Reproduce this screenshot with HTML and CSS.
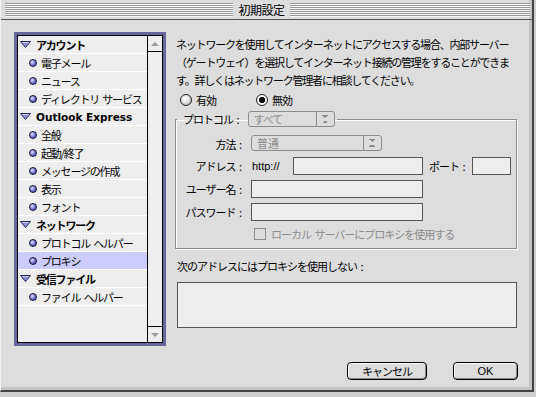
FILE: index.html
```html
<!DOCTYPE html>
<html>
    <head>
        <title>初期設定</title>
        <link rel="stylesheet" href="styles.css">
    </head>
    <body>
        <div class="window">
            <div class="titlebar">
                <div class="stripes">
                    <span class="title">初期設定</span>
                </div>
            </div>

            <div class="content">
                <!-- left tree -->
                <div class="sidebar">
                    <div class="list-frame">
                        <ul class="tree">
                            <li class="group-row"><svg class="twisty" width="11" height="7" viewBox="0 0 11 7"><polygon points="0.5,0.5 10.5,0.5 5.5,6.5" fill="#8f8fe0" stroke="#222255"/><line x1="2" y1="1.5" x2="9" y2="1.5" stroke="#ccccff"/></svg>アカウント</li>
                            <li class="item"><span class="dot"></span>電子メール</li>
                            <li class="item"><span class="dot"></span>ニュース</li>
                            <li class="item"><span class="dot"></span>ディレクトリ サービス</li>
                            <li class="group-row latin"><svg class="twisty" width="11" height="7" viewBox="0 0 11 7"><polygon points="0.5,0.5 10.5,0.5 5.5,6.5" fill="#8f8fe0" stroke="#222255"/><line x1="2" y1="1.5" x2="9" y2="1.5" stroke="#ccccff"/></svg>Outlook Express</li>
                            <li class="item"><span class="dot"></span>全般</li>
                            <li class="item"><span class="dot"></span>起動/終了</li>
                            <li class="item"><span class="dot"></span>メッセージの作成</li>
                            <li class="item"><span class="dot"></span>表示</li>
                            <li class="item"><span class="dot"></span>フォント</li>
                            <li class="group-row"><svg class="twisty" width="11" height="7" viewBox="0 0 11 7"><polygon points="0.5,0.5 10.5,0.5 5.5,6.5" fill="#8f8fe0" stroke="#222255"/><line x1="2" y1="1.5" x2="9" y2="1.5" stroke="#ccccff"/></svg>ネットワーク</li>
                            <li class="item"><span class="dot"></span>プロトコル ヘルパー</li>
                            <li class="item selected"><span class="dot"></span>プロキシ</li>
                            <li class="group-row"><svg class="twisty" width="11" height="7" viewBox="0 0 11 7"><polygon points="0.5,0.5 10.5,0.5 5.5,6.5" fill="#8f8fe0" stroke="#222255"/><line x1="2" y1="1.5" x2="9" y2="1.5" stroke="#ccccff"/></svg>受信ファイル</li>
                            <li class="item"><span class="dot"></span>ファイル ヘルパー</li>
                        </ul>
                        <div class="scrollbar">
                            <div class="arrow-box up"><span class="tri-up"></span></div>
                            <div class="track"></div>
                            <div class="arrow-box down"><span class="tri-down"></span></div>
                        </div>
                    </div>
                </div>

                <!-- right pane -->
                <div class="pane">
                    <p class="intro">ネットワークを使用してインターネットにアクセスする場合、内部サーバー<br>（ゲートウェイ）を選択してインターネット接続の管理をすることができま<br>す。詳しくはネットワーク管理者に相談してください。</p>

                    <div class="radios">
                        <label class="radio"><span class="radio-ball"></span>有効</label>
                        <label class="radio on"><span class="radio-ball"></span>無効</label>
                    </div>

                    <fieldset class="group">
                        <legend class="legend">
                            <span>プロトコル :</span>
                            <span class="popup popup-small"><span class="popup-text">すべて</span><span class="popup-arrows"></span></span>
                        </legend>
                        <div class="form-grid">
                            <span class="label">方法 :</span>
                            <div class="field"><span class="popup popup-wide"><span class="popup-text">普通</span><span class="popup-arrows"></span></span></div>

                            <span class="label">アドレス :</span>
                            <div class="field">
                                <span class="latin-text">http://</span>
                                <span class="input address"></span>
                                <span class="port-label">ポート :</span>
                                <span class="input port"></span>
                            </div>

                            <span class="label">ユーザー名 :</span>
                            <div class="field"><span class="input long"></span></div>

                            <span class="label">パスワード :</span>
                            <div class="field"><span class="input long"></span></div>

                            <span class="label"></span>
                            <div class="field check-row"><span class="checkbox"></span>ローカル サーバーにプロキシを使用する</div>
                        </div>
                    </fieldset>

                    <div class="bypass-label">次のアドレスにはプロキシを使用しない :</div>
                    <div class="bypass-box"></div>

                    <div class="buttons">
                        <span class="button cancel">キャンセル</span>
                        <span class="button ok">OK</span>
                    </div>
                </div>
            </div>
        </div>
    </body>
</html>
```

FILE: styles.css
```css
body {
    margin: 0;
    padding: 0;
    background-color: #cfcfcf;
    font-family: "Noto Sans CJK JP", "DejaVu Sans", sans-serif;
    font-size: 11px;
    word-spacing: 2px;
    color: #000;
}

.window {
    width: 534px;
    height: 392px;
    box-sizing: border-box;
    background-color: #dddddd;
    border-left: 1px solid #f4f4f4;
    border-right: 2px solid #444;
    border-bottom: 2px solid #444;
    box-shadow: inset -3px -3px 0 #c4c4c4;
}

/* title bar with pinstripes */
.titlebar {
    height: 20px;
    border-bottom: 1px solid #555;
    padding: 3px 2px 0 4px;
    box-sizing: border-box;
}

.stripes {
    height: 14px;
    display: flex;
    justify-content: center;
    align-items: center;
    background: repeating-linear-gradient(to bottom, #9a9a9a 0, #9a9a9a 1px, #f6f6f6 1px, #f6f6f6 2px);
}

.title {
    background-color: #dddddd;
    padding: 0 5px;
    margin-right: 12px;
    height: 16px;
    line-height: 16px;
    font-size: 12px;
    letter-spacing: -0.5px;
}

.content {
    display: flex;
    padding: 12px 0 0 13px;
}

/* sidebar list */
.sidebar {
    width: 152px;
    height: 314px;
    box-sizing: border-box;
    border: 3px solid #666699;
}

.list-frame {
    display: flex;
    height: 100%;
    box-sizing: border-box;
    border: 1px solid #000;
    background-color: #eeeeee;
}

.tree {
    list-style: none;
    margin: 0;
    padding: 0;
    width: 129px;
    overflow: hidden;
}

.tree li {
    height: 18px;
    box-sizing: border-box;
    border-bottom: 1px solid #ffffff;
    display: flex;
    align-items: center;
    white-space: pre;
    letter-spacing: -1.2px;
}

.group-row {
    font-weight: bold;
    padding-left: 2px;
}

.group-row.latin {
    font-family: "DejaVu Sans", sans-serif;
    font-size: 10.5px;
    letter-spacing: 0;
    word-spacing: 0;
}

.twisty {
    margin-right: 5px;
}

.item {
    padding-left: 11px;
}

.item.selected {
    background-color: #ccccff;
}

.dot {
    width: 6px;
    height: 6px;
    border-radius: 50%;
    border: 1px solid #111133;
    background: radial-gradient(circle at 35% 35%, #e6e6ff 0, #8080e0 45%, #33338a 100%);
    margin-right: 4px;
    flex-shrink: 0;
}

.scrollbar {
    width: 14px;
    border-left: 1px solid #000;
    display: flex;
    flex-direction: column;
    background-color: #eeeeee;
}

.arrow-box {
    height: 15px;
    display: flex;
    align-items: center;
    justify-content: center;
}

.arrow-box.up {
    border-bottom: 1px solid #000;
}

.arrow-box.down {
    border-top: 1px solid #000;
}

.track {
    flex: 1;
}

.tri-up {
    width: 0;
    height: 0;
    border-left: 4px solid transparent;
    border-right: 4px solid transparent;
    border-bottom: 4px solid #9a9a9a;
}

.tri-down {
    width: 0;
    height: 0;
    border-left: 4px solid transparent;
    border-right: 4px solid transparent;
    border-top: 4px solid #9a9a9a;
}

/* right pane */
.pane {
    width: 344px;
    margin-left: 8px;
}

.intro {
    margin: 0;
    padding: 3px 0 0 2px;
    line-height: 18px;
    letter-spacing: -1.2px;
    white-space: nowrap;
}

.radios {
    display: flex;
    height: 14px;
    margin-top: 4px;
    padding-left: 6px;
}

.radio {
    display: flex;
    align-items: center;
    letter-spacing: -1px;
}

.radio + .radio {
    margin-left: 40px;
}

.radio-ball {
    width: 12px;
    height: 12px;
    box-sizing: border-box;
    border-radius: 50%;
    border: 1px solid #222;
    background: radial-gradient(circle at 40% 35%, #ffffff 0, #e8e8e8 40%, #9c9c9c 100%);
    margin-right: 4px;
}

.radio.on .radio-ball {
    background: radial-gradient(circle, #000 0, #000 2.5px, #444 3px, #fff 3.5px, #ddd 100%);
}

/* protocol group */
.group {
    margin: 4px 0 0 1px;
    width: 342px;
    box-sizing: border-box;
    padding: 8px 0 6px 0;
    border: 1px solid #8c8c8c;
    box-shadow: inset 1px 1px 0 #fff, 1px 1px 0 #fff;
}

.legend {
    display: flex;
    align-items: center;
    padding: 0 2px 0 6px;
    margin-left: 1px;
    height: 16px;
    letter-spacing: -1px;
}

.legend .popup {
    margin-left: 9px;
}

.popup {
    display: inline-flex;
    height: 16px;
    box-sizing: border-box;
    border: 1px solid #8c8c8c;
    border-radius: 3px;
    color: #8c8c8c;
    background-color: #dddddd;
}

.popup-small {
    width: 87px;
}

.popup-wide {
    width: 131px;
}

.popup-text {
    flex: 1;
    padding-left: 5px;
    line-height: 14px;
}

.popup-arrows {
    width: 17px;
    border-left: 1px solid #8c8c8c;
    background:
        linear-gradient(to top right, transparent 50%, #8c8c8c 50%) no-repeat,
        linear-gradient(to top left, transparent 50%, #8c8c8c 50%) no-repeat,
        linear-gradient(to bottom right, transparent 50%, #8c8c8c 50%) no-repeat,
        linear-gradient(to bottom left, transparent 50%, #8c8c8c 50%) no-repeat;
    background-size: 3px 3px;
    background-position: 5px 3px, 8px 3px, 5px 8px, 8px 8px;
}

.form-grid {
    display: grid;
    grid-template-columns: 64px 1fr;
    column-gap: 10px;
    row-gap: 5px;
    padding-left: 1px;
}

.label {
    text-align: right;
    align-self: center;
    letter-spacing: -1px;
    white-space: nowrap;
}

.field {
    display: flex;
    align-items: center;
    min-height: 16px;
}

.form-grid .field:first-of-type {
    margin-bottom: 1px;
}

.latin-text {
    font-family: "Liberation Sans", sans-serif;
    font-size: 11px;
    margin-left: 1px;
    width: 41px;
}

.input {
    display: inline-block;
    height: 18px;
    box-sizing: border-box;
    border: 1px solid #555;
    background-color: #eeeeee;
}

.input.address {
    width: 130px;
}

.input.port {
    width: 39px;
}

.input.long {
    width: 172px;
}

.port-label {
    margin: 0 7px 0 6px;
    letter-spacing: -1px;
}

.check-row {
    color: #8c8c8c;
    letter-spacing: -1px;
    padding-left: 3px;
    height: 14px;
}

.checkbox {
    width: 12px;
    height: 12px;
    box-sizing: border-box;
    border: 1px solid #8c8c8c;
    background-color: #dddddd;
    margin-right: 5px;
}

.bypass-label {
    margin: 9px 0 0 3px;
    line-height: 16px;
    letter-spacing: -1px;
}

.bypass-box {
    margin: 8px 0 0 3px;
    width: 340px;
    height: 46px;
    box-sizing: border-box;
    border: 1px solid #555;
    background-color: #eeeeee;
}

.buttons {
    display: flex;
    justify-content: flex-end;
    margin-top: 34px;
    gap: 26px;
}

.button {
    height: 18px;
    box-sizing: border-box;
    border: 1px solid #000;
    border-radius: 4px;
    background-color: #dddddd;
    box-shadow: inset 1px 1px 0 #fff, inset -1px -1px 0 #888;
    display: flex;
    align-items: center;
    justify-content: center;
    letter-spacing: -1px;
}

.button.cancel {
    width: 80px;
}

.button.ok {
    width: 65px;
    font-family: "Liberation Sans", sans-serif;
    letter-spacing: 0;
}
```
